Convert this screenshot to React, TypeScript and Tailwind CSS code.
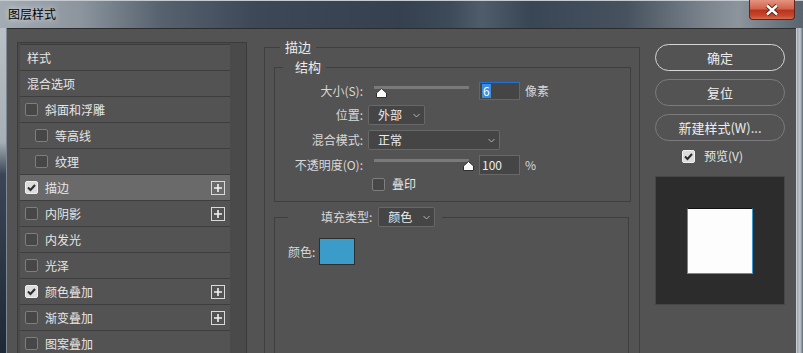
import React from "react";

function CheckBox({ checked }: { checked?: boolean }) {
  return checked ? (
    <span className="w-[13px] h-[13px] shrink-0 rounded-[2px] bg-[#dcdcdc] border border-[#f0f0f0] flex items-center justify-center">
      <svg width="11" height="11" viewBox="0 0 11 11">
        <path d="M2 5.5 L4.5 8 L9 3" fill="none" stroke="#2b2b2b" strokeWidth="2" />
      </svg>
    </span>
  ) : (
    <span className="w-[13px] h-[13px] shrink-0 rounded-[2px] bg-[#474747] border border-[#7e7e7e]" />
  );
}

function PlusBox() {
  return (
    <span className="w-[14px] h-[14px] border border-[#dadada] flex items-center justify-center">
      <svg width="10" height="10" viewBox="0 0 10 10">
        <path d="M5 1 V9 M1 5 H9" stroke="#f2f2f2" strokeWidth="1.6" />
      </svg>
    </span>
  );
}

function Chevron() {
  return (
    <svg width="7" height="5" viewBox="0 0 7 5" className="shrink-0">
      <path d="M0.5 1 L3.5 4 L6.5 1" fill="none" stroke="#b5b5b5" strokeWidth="1" />
    </svg>
  );
}

function Thumb() {
  return (
    <svg width="11" height="10" viewBox="0 0 11 10">
      <path d="M5.5 0.5 L10.5 5 L10.5 9.5 L0.5 9.5 L0.5 5 Z" fill="#fafafa" stroke="#2f2f2f" strokeWidth="1" />
    </svg>
  );
}

function Slider({ value, trackTop, thumbTop }: { value: number; trackTop: number; thumbTop: number }) {
  return (
    <div className="relative h-[20px] w-[105px] shrink-0">
      <div className="absolute left-0 h-[3px] w-[95px] bg-[#7a7a7a]" style={{ top: trackTop }} />
      <div className="absolute" style={{ left: 2 + value * 0.87, top: thumbTop }}>
        <Thumb />
      </div>
    </div>
  );
}

function Select({ text, width }: { text: string; width: string }) {
  return (
    <div
      className={`${width} h-[20px] shrink-0 bg-[#454545] border border-[#686868] rounded-[2px] flex items-center justify-between pl-[9px] pr-[4px] text-[12px] text-[#ececec]`}
    >
      <span>{text}</span>
      <Chevron />
    </div>
  );
}

type Item = { label: string; check?: boolean; checked?: boolean; indent?: boolean; plus?: boolean; selected?: boolean };

const items: Item[] = [
  { label: "样式" },
  { label: "混合选项" },
  { label: "斜面和浮雕", check: true },
  { label: "等高线", check: true, indent: true },
  { label: "纹理", check: true, indent: true },
  { label: "描边", check: true, checked: true, plus: true, selected: true },
  { label: "内阴影", check: true, plus: true },
  { label: "内发光", check: true },
  { label: "光泽", check: true },
  { label: "颜色叠加", check: true, checked: true, plus: true },
  { label: "渐变叠加", check: true, plus: true },
  { label: "图案叠加", check: true },
];

function StyleList() {
  return (
    <div className="ml-[10px] mt-[13px] w-[230px] h-[320px] shrink-0 border border-[#3c3c3c] bg-[#4a4a4a] pl-[2px] pt-[1px]">
      <ul className="w-[210px] border-t border-[#3d3d3d]">
        {items.map((el, i) => (
          <li
            key={i}
            className={`h-[26px] border-b border-[#3d3d3d] flex items-center pr-[5px] text-[12px] text-[#e6e6e6] ${
              el.selected ? "bg-[#6a6a6a]" : "bg-[#535353]"
            } ${el.check ? (el.indent ? "pl-[15px]" : "pl-[5px]") : "pl-[7px]"}`}
          >
            {el.check && <CheckBox checked={el.checked} />}
            <span className={`${el.check ? "ml-[7px]" : ""} flex-1`}>{el.label}</span>
            {el.plus && <PlusBox />}
          </li>
        ))}
      </ul>
    </div>
  );
}

function Label({ text }: { text: string }) {
  return <span className="w-[88px] shrink-0 text-right text-[12px] text-[#d8d8d8]">{text}</span>;
}

function StrokePanel() {
  return (
    <fieldset className="ml-[17px] mt-[11px] w-[376px] h-[330px] shrink-0 border border-[#3f3f3f] p-0 m-0">
      <legend className="ml-[15px] px-[5px] text-[13px] leading-[14px] text-[#ececec]">描边</legend>
      <fieldset className="ml-[9px] mt-[6px] w-[357px] border border-[#3f3f3f] p-0 pb-[9px]">
        <legend className="ml-[8px] pl-[12px] pr-[5px] text-[13px] leading-[14px] text-[#ececec]">结构</legend>
        <div className="mt-[7px] h-[20px] flex items-center">
          <Label text="大小(S):" />
          <div className="ml-[11px]">
            <Slider value={0} trackTop={5} thumbTop={7} />
          </div>
          <div className="w-[41px] h-[18px] border border-[#2371d6] bg-[#454545] flex items-center pl-[2px]">
            <span className="bg-[#3b8ee0] text-white text-[12px] leading-[14px] px-[1px]">6</span>
          </div>
          <span className="ml-[5px] text-[12px] text-[#d8d8d8]">像素</span>
        </div>
        <div className="mt-[4px] h-[20px] flex items-center">
          <Label text="位置:" />
          <div className="ml-[5px]">
            <Select text="外部" width="w-[57px]" />
          </div>
        </div>
        <div className="mt-[5px] h-[20px] flex items-center">
          <Label text="混合模式:" />
          <div className="ml-[5px]">
            <Select text="正常" width="w-[132px]" />
          </div>
        </div>
        <div className="mt-[5px] h-[20px] flex items-center">
          <Label text="不透明度(O):" />
          <div className="ml-[11px]">
            <Slider value={100} trackTop={4} thumbTop={6} />
          </div>
          <div className="w-[41px] h-[20px] border border-[#686868] bg-[#454545] flex items-center pl-[2px] text-[12px] text-[#ececec]">
            100
          </div>
          <span className="ml-[5px] text-[12px] text-[#d8d8d8]">%</span>
        </div>
        <div className="mt-[1px] h-[16px] flex items-center pl-[97px]">
          <CheckBox />
          <span className="ml-[7px] text-[12px] text-[#e6e6e6]">叠印</span>
        </div>
      </fieldset>
      <fieldset className="ml-[9px] mt-[5px] w-[355px] h-[150px] border border-[#3f3f3f] p-0">
        <legend className="ml-[13px] pl-[33px] pr-[7px]">
          <div className="flex items-center gap-[6px]">
            <span className="text-[12px] text-[#d8d8d8]">填充类型:</span>
            <Select text="颜色" width="w-[57px]" />
          </div>
        </legend>
        <div className="mt-[11px] ml-[13px] flex items-center">
          <span className="w-[31px] text-[12px] text-[#d8d8d8]">颜色:</span>
          <div className="w-[36px] h-[27px] bg-[#3b9bc9] border border-[#2e2e2e]" />
        </div>
      </fieldset>
    </fieldset>
  );
}

function Button({ text, primary }: { text: string; primary?: boolean }) {
  return (
    <button
      className={`w-[130px] h-[27px] rounded-full text-[13px] text-[#ececec] ${
        primary ? "border-[1.5px] border-[#d6d6d6]" : "border border-[#7c7c7c]"
      }`}
    >
      {text}
    </button>
  );
}

function SideColumn() {
  return (
    <div className="ml-[15px] mt-[15px] w-[130px] shrink-0 flex flex-col">
      <div className="flex flex-col gap-[8px]">
        <Button text="确定" primary />
        <Button text="复位" />
        <Button text="新建样式(W)..." />
      </div>
      <div className="mt-[8px] h-[14px] flex items-center pl-[27px]">
        <CheckBox checked />
        <span className="ml-[9px] text-[12px] text-[#e6e6e6]">预览(V)</span>
      </div>
      <div className="mt-[13px] w-[130px] h-[129px] bg-[#2c2c2c] border border-[#464646] flex items-center justify-center">
        <div className="w-[66px] h-[66px] bg-[#fdfdfd] border border-[#3a9ad0] border-t-[#111111]" />
      </div>
    </div>
  );
}

function CloseButton() {
  return (
    <div className="w-[46px] h-[20px] rounded-b-[4px] border border-t-0 border-[#5f261b] bg-[linear-gradient(to_bottom,#e49480_0%,#d2644b_45%,#b8341c_55%,#c64a30_85%,#d86c52_100%)] flex items-center justify-center">
      <svg width="16" height="12" viewBox="0 0 16 12">
        <path d="M3 1.5 L13 10.5 M13 1.5 L3 10.5" stroke="#4a1b12" strokeWidth="4.2" />
        <path d="M3 1.5 L13 10.5 M13 1.5 L3 10.5" stroke="#ffffff" strokeWidth="2.4" />
      </svg>
    </div>
  );
}

export default function App() {
  return (
    <div className="w-[803px] h-[353px] overflow-hidden flex flex-col font-['Noto_Sans_CJK_SC','Noto_Sans',sans-serif] bg-[#2a3543]">
      <div className="h-[28px] shrink-0 flex items-start border-t border-[#c4cad0] bg-[linear-gradient(to_right,#a3abb3_0%,#8c959e_10%,#56626e_20%,#3c4856_32%,#35414f_50%,#3d4a58_56%,#4f5c6a_60%,#394654_66%,#46525e_78%,#7c858e_88%,#8c949c_92%,#58636e_100%)]">
        <span className="ml-[8px] mt-[6px] text-[12px] leading-[14px] text-black [text-shadow:0_0_6px_rgba(255,255,255,0.9)]">
          图层样式
        </span>
        <div className="ml-auto mr-[8px] -mt-[1px]">
          <CloseButton />
        </div>
      </div>
      <div className="flex flex-1 min-h-0">
        <div className="w-[7px] shrink-0 bg-[linear-gradient(to_bottom,#b9c0c6_0%,#a7afb6_35%,#3a4655_45%,#1e2836_100%)] border-r border-[#7e8994]" />
        <div className="flex-1 flex items-start bg-[#535353] border-t border-[#2d2d2d]">
          <StyleList />
          <StrokePanel />
          <SideColumn />
        </div>
        <div className="w-[7px] shrink-0 border-l border-[#c7cdd3] bg-[linear-gradient(to_right,#9aa4ae,#c2c9cf,#5d6873)]" />
      </div>
    </div>
  );
}
